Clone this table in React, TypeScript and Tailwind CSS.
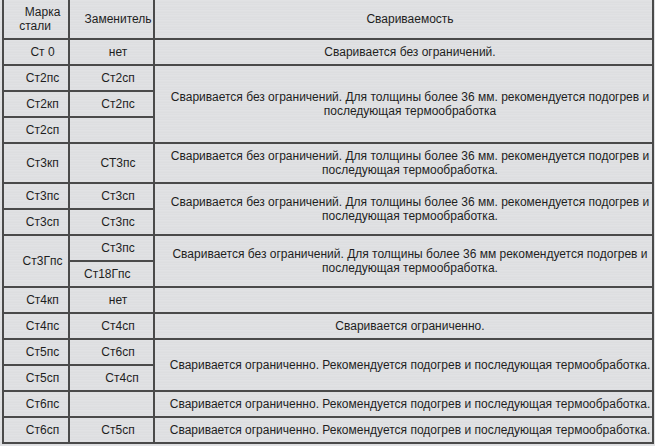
const cell =
  'border-2 border-[#4a4a4a] pl-[14px] pr-px py-[5px] text-center align-middle leading-[14px] font-normal';

const metal =
  'bg-[#dfe0e2] bg-[repeating-linear-gradient(180deg,#dddee0_0px,#e5e6e8_1px,#d9dadc_2px,#e1e2e4_3px,#dcdde0_5px)]';

const hot = 'Сваривается без ограничений. Для толщины более 36 мм. рекомендуется подогрев и последующая термообработка';
const limited = 'Сваривается ограниченно. Рекомендуется подогрев и последующая термообработка.';

export default function App() {
  return (
    <div
      className={`w-[655px] h-[446px] overflow-hidden ${metal} text-[12px] text-[#1e1e1e]`}
      style={{ fontFamily: '"Liberation Sans", Arial, sans-serif' }}
    >
      <table className="-mt-[2px] ml-[2px] w-[652px] table-fixed border-collapse">
        <colgroup>
          <col className="w-[66px]" />
          <col className="w-[85px]" />
          <col />
        </colgroup>
        <thead>
          <tr>
            <th className={cell}>
              <span className="block">Марка</span>
              <span className="block pr-[15px]">стали</span>
            </th>
            <th className={cell}>Заменитель</th>
            <th className={cell}>Свариваемость</th>
          </tr>
        </thead>
        <tbody>
          <tr>
            <td className={cell}>Ст 0</td>
            <td className={cell}>нет</td>
            <td className={cell}>Сваривается без ограничений.</td>
          </tr>
          <tr>
            <td className={cell}>Ст2пс</td>
            <td className={cell}>Ст2сп</td>
            <td className={cell} rowSpan={3}>{hot}</td>
          </tr>
          <tr>
            <td className={cell}>Ст2кп</td>
            <td className={cell}>Ст2пс</td>
          </tr>
          <tr>
            <td className={cell}>Ст2сп</td>
            <td className={cell}></td>
          </tr>
          <tr>
            <td className={cell}>Ст3кп</td>
            <td className={cell}>СТ3пс</td>
            <td className={cell}>{hot}.</td>
          </tr>
          <tr>
            <td className={cell}>Ст3пс</td>
            <td className={cell}>Ст3сп</td>
            <td className={cell} rowSpan={2}>{hot}.</td>
          </tr>
          <tr>
            <td className={cell}>Ст3сп</td>
            <td className={cell}>Ст3пс</td>
          </tr>
          <tr>
            <td className={cell} rowSpan={2}>Ст3Гпс</td>
            <td className={cell}>Ст3пс</td>
            <td className={cell} rowSpan={2}>
              Сваривается без ограничений. Для толщины более 36 мм рекомендуется подогрев и последующая термообработка.
            </td>
          </tr>
          <tr>
            <td className={`${cell} !text-left`}>Ст18Гпс</td>
          </tr>
          <tr>
            <td className={cell}>Ст4кп</td>
            <td className={cell}>нет</td>
            <td className={cell}></td>
          </tr>
          <tr>
            <td className={cell}>Ст4пс</td>
            <td className={cell}>Ст4сп</td>
            <td className={cell}>Сваривается ограниченно.</td>
          </tr>
          <tr>
            <td className={cell}>Ст5пс</td>
            <td className={cell}>Ст6сп</td>
            <td className={cell} rowSpan={2}>{limited}</td>
          </tr>
          <tr>
            <td className={cell}>Ст5сп</td>
            <td className={`${cell} !pl-[22px]`}>Ст4сп</td>
          </tr>
          <tr>
            <td className={cell}>Ст6пс</td>
            <td className={cell}></td>
            <td className={cell}>{limited}</td>
          </tr>
          <tr>
            <td className={cell}>Ст6сп</td>
            <td className={cell}>Ст5сп</td>
            <td className={cell}>{limited}</td>
          </tr>
        </tbody>
      </table>
    </div>
  );
}
